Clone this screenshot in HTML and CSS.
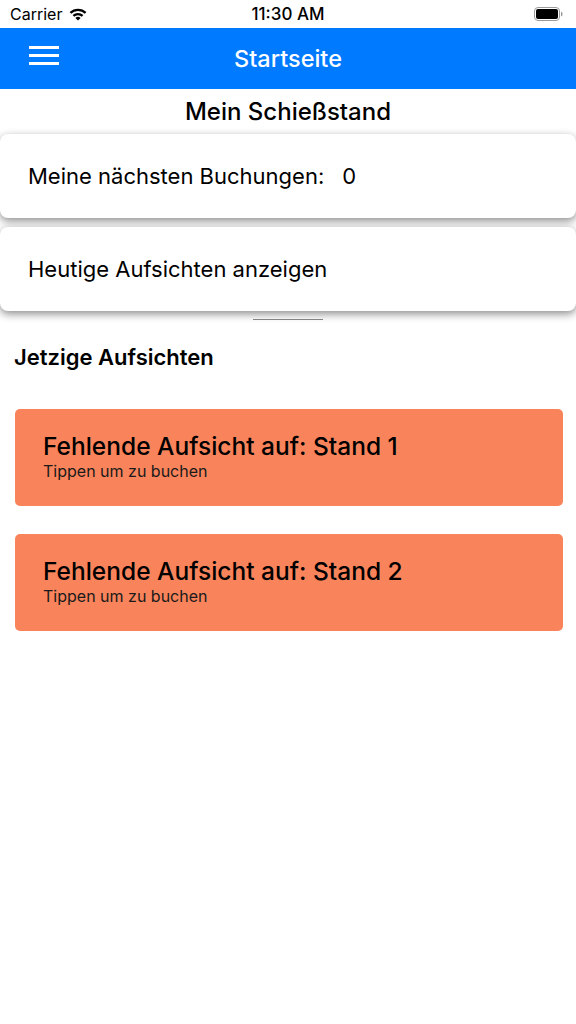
FILE: index.html
```html
<!DOCTYPE html>
<html lang="de">
<head>
  <meta charset="UTF-8">
  <meta name="viewport" content="width=device-width, initial-scale=1">
  <title>Startseite</title>
  <link rel="stylesheet" href="styles.css">
</head>
<body>
  <!-- Statusleiste -->
  <div class="status-bar">
    <div class="status-left">
      <span>Carrier</span>
      <svg class="wifi" viewBox="0 0 20 15" width="20" height="15">
        <path d="M10 13.6 L12.6 10.9 A3.8 3.8 0 0 0 7.4 10.9 Z" fill="#000"/>
        <path d="M4.6 8.1 A7.7 7.7 0 0 1 15.4 8.1 L13.8 9.7 A5.5 5.5 0 0 0 6.2 9.7 Z" fill="#000"/>
        <path d="M1.6 5.1 A12 12 0 0 1 18.4 5.1 L16.8 6.7 A9.7 9.7 0 0 0 3.2 6.7 Z" fill="#000"/>
      </svg>
    </div>
    <div class="status-time">11:30 AM</div>
    <div class="status-right">
      <svg viewBox="0 0 30 14" width="30" height="14">
        <rect x="0.5" y="0.5" width="25" height="13" rx="3.5" fill="none" stroke="#9a9a9a"/>
        <rect x="2" y="2" width="22" height="10" rx="2" fill="#000"/>
        <path d="M27 4.5 Q28.6 5 28.6 7 Q28.6 9 27 9.5 Z" fill="#9a9a9a"/>
      </svg>
    </div>
  </div>

  <!-- Navigationsleiste -->
  <header class="nav-bar">
    <div class="menu-icon">
      <span></span><span></span><span></span>
    </div>
    <h1>Startseite</h1>
  </header>

  <h2 class="page-title">Mein Schießstand</h2>

  <div class="card-list">
    <div class="card">Meine nächsten Buchungen:<span class="count">0</span></div>
    <div class="card">Heutige Aufsichten anzeigen</div>
  </div>

  <div class="divider"></div>

  <h3 class="section-title">Jetzige Aufsichten</h3>

  <div class="alerts">
    <div class="alert">
      <div class="alert-title">Fehlende Aufsicht auf: Stand 1</div>
      <div class="alert-sub">Tippen um zu buchen</div>
    </div>
    <div class="alert">
      <div class="alert-title">Fehlende Aufsicht auf: Stand 2</div>
      <div class="alert-sub">Tippen um zu buchen</div>
    </div>
  </div>
</body>
</html>
```

FILE: styles.css
```css
/* Grundlayout */
body {
  margin: 0;
  font-family: "Inter", "Liberation Sans", sans-serif;
  color: #000;
  background: #fff;
  width: 576px;
  min-height: 1024px;
}

/* Statusleiste */
.status-bar {
  height: 28px;
  display: flex;
  align-items: center;
  justify-content: space-between;
  padding: 0 10px;
  font-size: 16px;
  position: relative;
}

.status-left {
  display: flex;
  align-items: center;
  gap: 6px;
}

.status-time {
  position: absolute;
  left: 0;
  right: 0;
  text-align: center;
  font-size: 17px;
  font-weight: 500;
  pointer-events: none;
}

.status-right {
  display: flex;
  align-items: center;
  padding-right: 2px;
}

/* Navigationsleiste */
.nav-bar {
  height: 61px;
  background: #007aff;
  display: flex;
  align-items: center;
  justify-content: center;
  position: relative;
}

.nav-bar h1 {
  margin: 0;
  color: #fff;
  font-size: 23.5px;
  font-weight: 500;
}

.menu-icon {
  position: absolute;
  left: 29px;
  top: 18px;
  width: 30px;
  display: flex;
  flex-direction: column;
  gap: 5px;
}

.menu-icon span {
  display: block;
  height: 3px;
  background: #fff;
}

.page-title {
  margin: 0;
  height: 45px;
  line-height: 45px;
  text-align: center;
  font-size: 24px;
  font-weight: 500;
}

/* Karten */
.card-list {
  display: flex;
  flex-direction: column;
  gap: 9px;
}

.card {
  height: 84px;
  background: #fff;
  border-radius: 8px;
  box-shadow: 0 3px 8px rgba(0, 0, 0, 0.45);
  display: flex;
  align-items: center;
  padding-left: 28px;
  font-size: 22px;
}

.card .count {
  margin-left: 18px;
}

.divider {
  width: 70px;
  height: 1px;
  background: #8a8a8a;
  margin: 8px auto 0;
}

.section-title {
  margin: 0;
  padding: 24px 14px 0;
  font-size: 22px;
  font-weight: 600;
}

/* Fehlende Aufsichten */
.alerts {
  display: flex;
  flex-direction: column;
  gap: 28px;
  padding: 39px 13px 0 15px;
}

.alert {
  height: 97px;
  background: #f9845b;
  border-radius: 5px;
  padding: 0 0 3px 28px;
  display: flex;
  flex-direction: column;
  justify-content: center;
  box-sizing: border-box;
}

.alert-title {
  font-size: 24.5px;
  font-weight: 500;
  line-height: 29px;
}

.alert-sub {
  font-size: 16px;
  line-height: 20px;
  color: #1a1a1a;
}
```
